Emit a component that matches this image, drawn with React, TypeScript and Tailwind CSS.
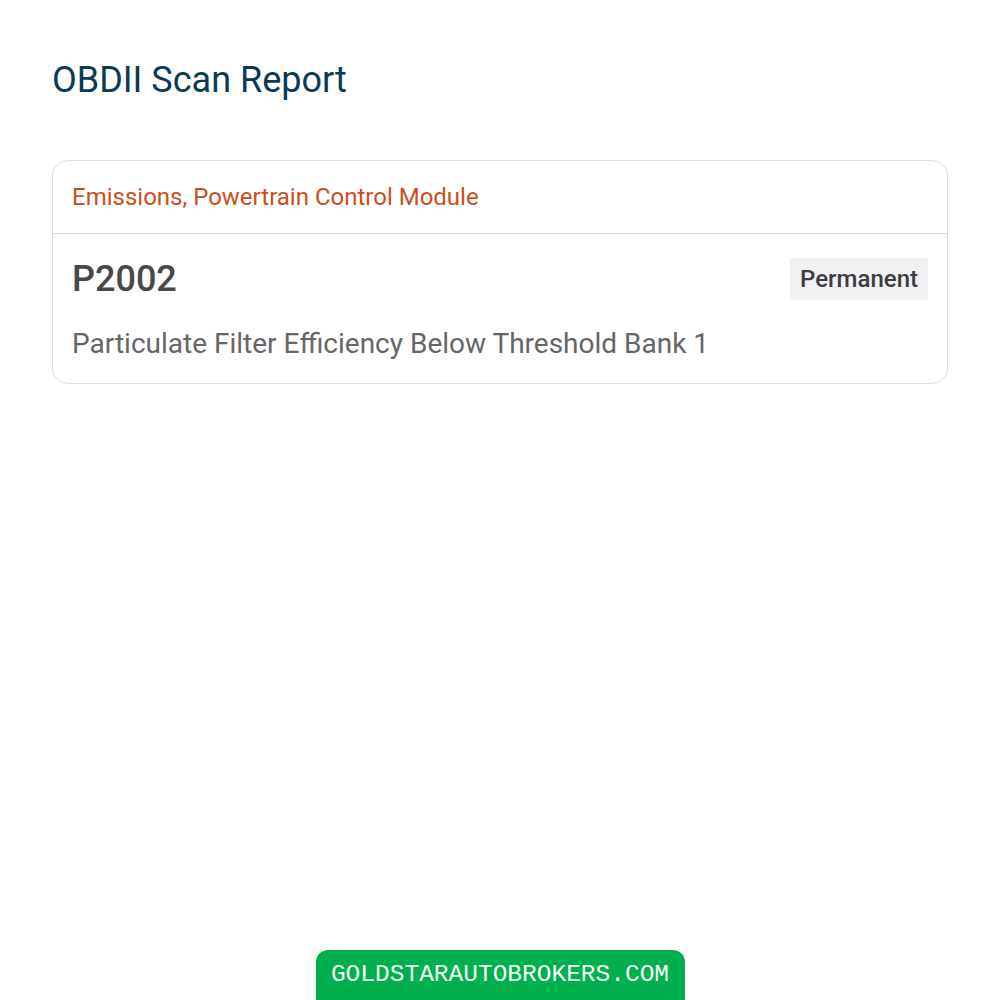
export default function App() {
  return (
    <div className="relative min-h-[1000px] w-full bg-white" style={{ fontFamily: "Roboto, 'Noto Sans', sans-serif" }}>
      <div className="px-[52px] pt-[58px]">
        <h1 className="text-[36px] leading-[44px] font-normal text-[#0b3a55]">OBDII Scan Report</h1>
        <div className="mt-[58px] rounded-[16px] border border-[#dcdcdc] bg-white">
          <div className="border-b border-[#d6d6d6] px-[19px] py-[22px]">
            <div className="text-[24px] leading-[28px] text-[#c8501a]">Emissions, Powertrain Control Module</div>
          </div>
          <div className="px-[19px] pt-[24px] pb-[21px]">
            <div className="flex items-center justify-between">
              <div className="text-[36px] leading-[42px] font-medium text-[#484848]">P2002</div>
              <div className="bg-[#f1f1f4] px-[10px] py-[7px] text-[24px] leading-[28px] font-medium text-[#3c3c42]">Permanent</div>
            </div>
            <div className="mt-[26px] text-[28px] leading-[36px] text-[#666666]">Particulate Filter Efficiency Below Threshold Bank 1</div>
          </div>
        </div>
      </div>
      <div className="absolute bottom-0 left-0 right-0 flex justify-center">
        <div className="w-[369px] rounded-t-[12px] bg-[#00b04f] pt-[11px] pb-[11px] text-center text-[24.5px] leading-[28px] text-[#f4fff8]" style={{ fontFamily: "'Courier New', 'Liberation Mono', monospace" }}>
          GOLDSTARAUTOBROKERS.COM
        </div>
      </div>
    </div>
  );
}
